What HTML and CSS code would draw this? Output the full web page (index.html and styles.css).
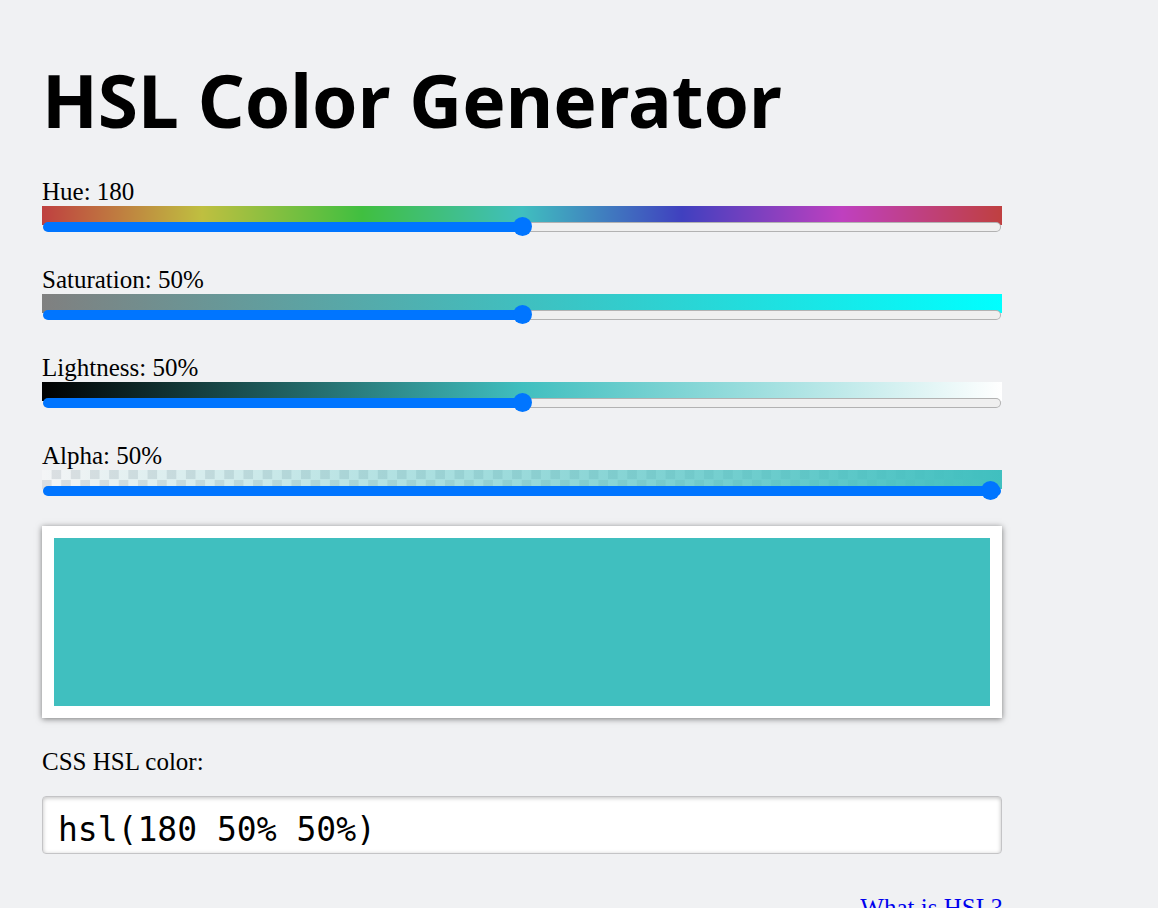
FILE: index.html
```html
<!DOCTYPE html>
<html lang="en">
<head>
<meta charset="utf-8">
<meta name="viewport" content="width=device-width, initial-scale=1">
<title>HSL Color Generator</title>
<link rel="stylesheet" href="styles.css">
</head>
<body>
<main class="page">
  <h1 class="title">HSL Color Generator</h1>
  <form class="controls">
    <div class="control">
      <label class="label" for="hue">Hue: 180</label>
      <div class="ramp ramp-hue"></div>
      <input class="slider" id="hue" type="range" min="0" max="360" value="180">
    </div>
    <div class="control">
      <label class="label" for="saturation">Saturation: 50%</label>
      <div class="ramp ramp-saturation"></div>
      <input class="slider" id="saturation" type="range" min="0" max="100" value="50">
    </div>
    <div class="control">
      <label class="label" for="lightness">Lightness: 50%</label>
      <div class="ramp ramp-lightness"></div>
      <input class="slider" id="lightness" type="range" min="0" max="100" value="50">
    </div>
    <div class="control">
      <label class="label" for="alpha">Alpha: 50%</label>
      <div class="ramp ramp-alpha"></div>
      <input class="slider slider-full" id="alpha" type="range" min="0" max="100" value="100">
    </div>
  </form>
  <div class="preview"></div>
  <div class="result">
    <label class="label" for="css-color">CSS HSL color:</label>
    <input class="output" id="css-color" type="text" value="hsl(180 50% 50%)">
  </div>
  <p class="more"><a href="#what-is-hsl">What is HSL?</a></p>
</main>
</body>
</html>
```
FILE: styles.css
```css
* {
  box-sizing: border-box;
}

body {
  margin: 0;
  background: #f0f1f3;
  color: #000;
  font: 25px/29px "Palatino Linotype", Palatino, "Liberation Serif", serif;
}

.page {
  max-width: 1044px;
  padding: 48px 42px;
}

.title {
  margin: 0 0 25px;
  font: bold 73px/104px "Segoe UI", "Noto Sans", "Open Sans", sans-serif;
}

.controls {
  display: grid;
  gap: 29px;
}

.control {
  display: flex;
  flex-direction: column;
}

.label {
  align-self: flex-start;
}

.ramp {
  height: 19px;
}

.ramp-hue {
  background: linear-gradient(to right, #bf4040, #bfbf40, #40bf40, #40bfbf, #4040bf, #bf40bf, #bf4040);
}

.ramp-saturation {
  background: linear-gradient(to right, #808080, #40bfbf, #00ffff);
}

.ramp-lightness {
  background: linear-gradient(to right, #000, #40bfbf, #fff);
}

.ramp-alpha {
  background:
    linear-gradient(to right, hsl(180 50% 50% / 0), hsl(180 50% 50%)),
    conic-gradient(#dcdfe2 25%, #f4f5f6 0 50%, #dcdfe2 0 75%, #f4f5f6 0) 0 0 / 2% 19px;
}

.slider {
  --fill: 50%;
  appearance: none;
  display: block;
  width: 100%;
  height: 19px;
  margin: -8px 0 0;
  padding: 0 1px;
  background: none;
}

.slider-full {
  --fill: 100%;
}

.slider::-webkit-slider-runnable-track {
  height: 10px;
  border: 1px solid transparent;
  border-radius: 5px;
  background:
    linear-gradient(to right, #0075ff var(--fill), transparent 0) border-box,
    linear-gradient(#efefef, #efefef) padding-box,
    linear-gradient(#b2b2b2, #b2b2b2) border-box;
}

.slider::-webkit-slider-thumb {
  appearance: none;
  width: 19px;
  height: 19px;
  margin-top: -6px;
  border-radius: 50%;
  background: #0075ff;
}

.preview {
  height: 192px;
  margin-top: 26px;
  border: 12px solid #fff;
  background: #40bfbf;
  box-shadow: 0 1px 6px rgb(0 0 0 / 50%);
}

.result {
  display: grid;
  gap: 20px;
  margin-top: 29px;
}

.output {
  width: 100%;
  height: 58px;
  padding: 8px 15px 0;
  border: 1px solid #c4c4c6;
  border-radius: 4px;
  background: #fff;
  box-shadow: inset 0 1px 4px rgb(0 0 0 / 25%);
  color: #000;
  font: 33px/40px Consolas, "DejaVu Sans Mono", monospace;
}

.more {
  margin: 39px 0 0;
  text-align: right;
}

.more a {
  color: #00e;
}
```
